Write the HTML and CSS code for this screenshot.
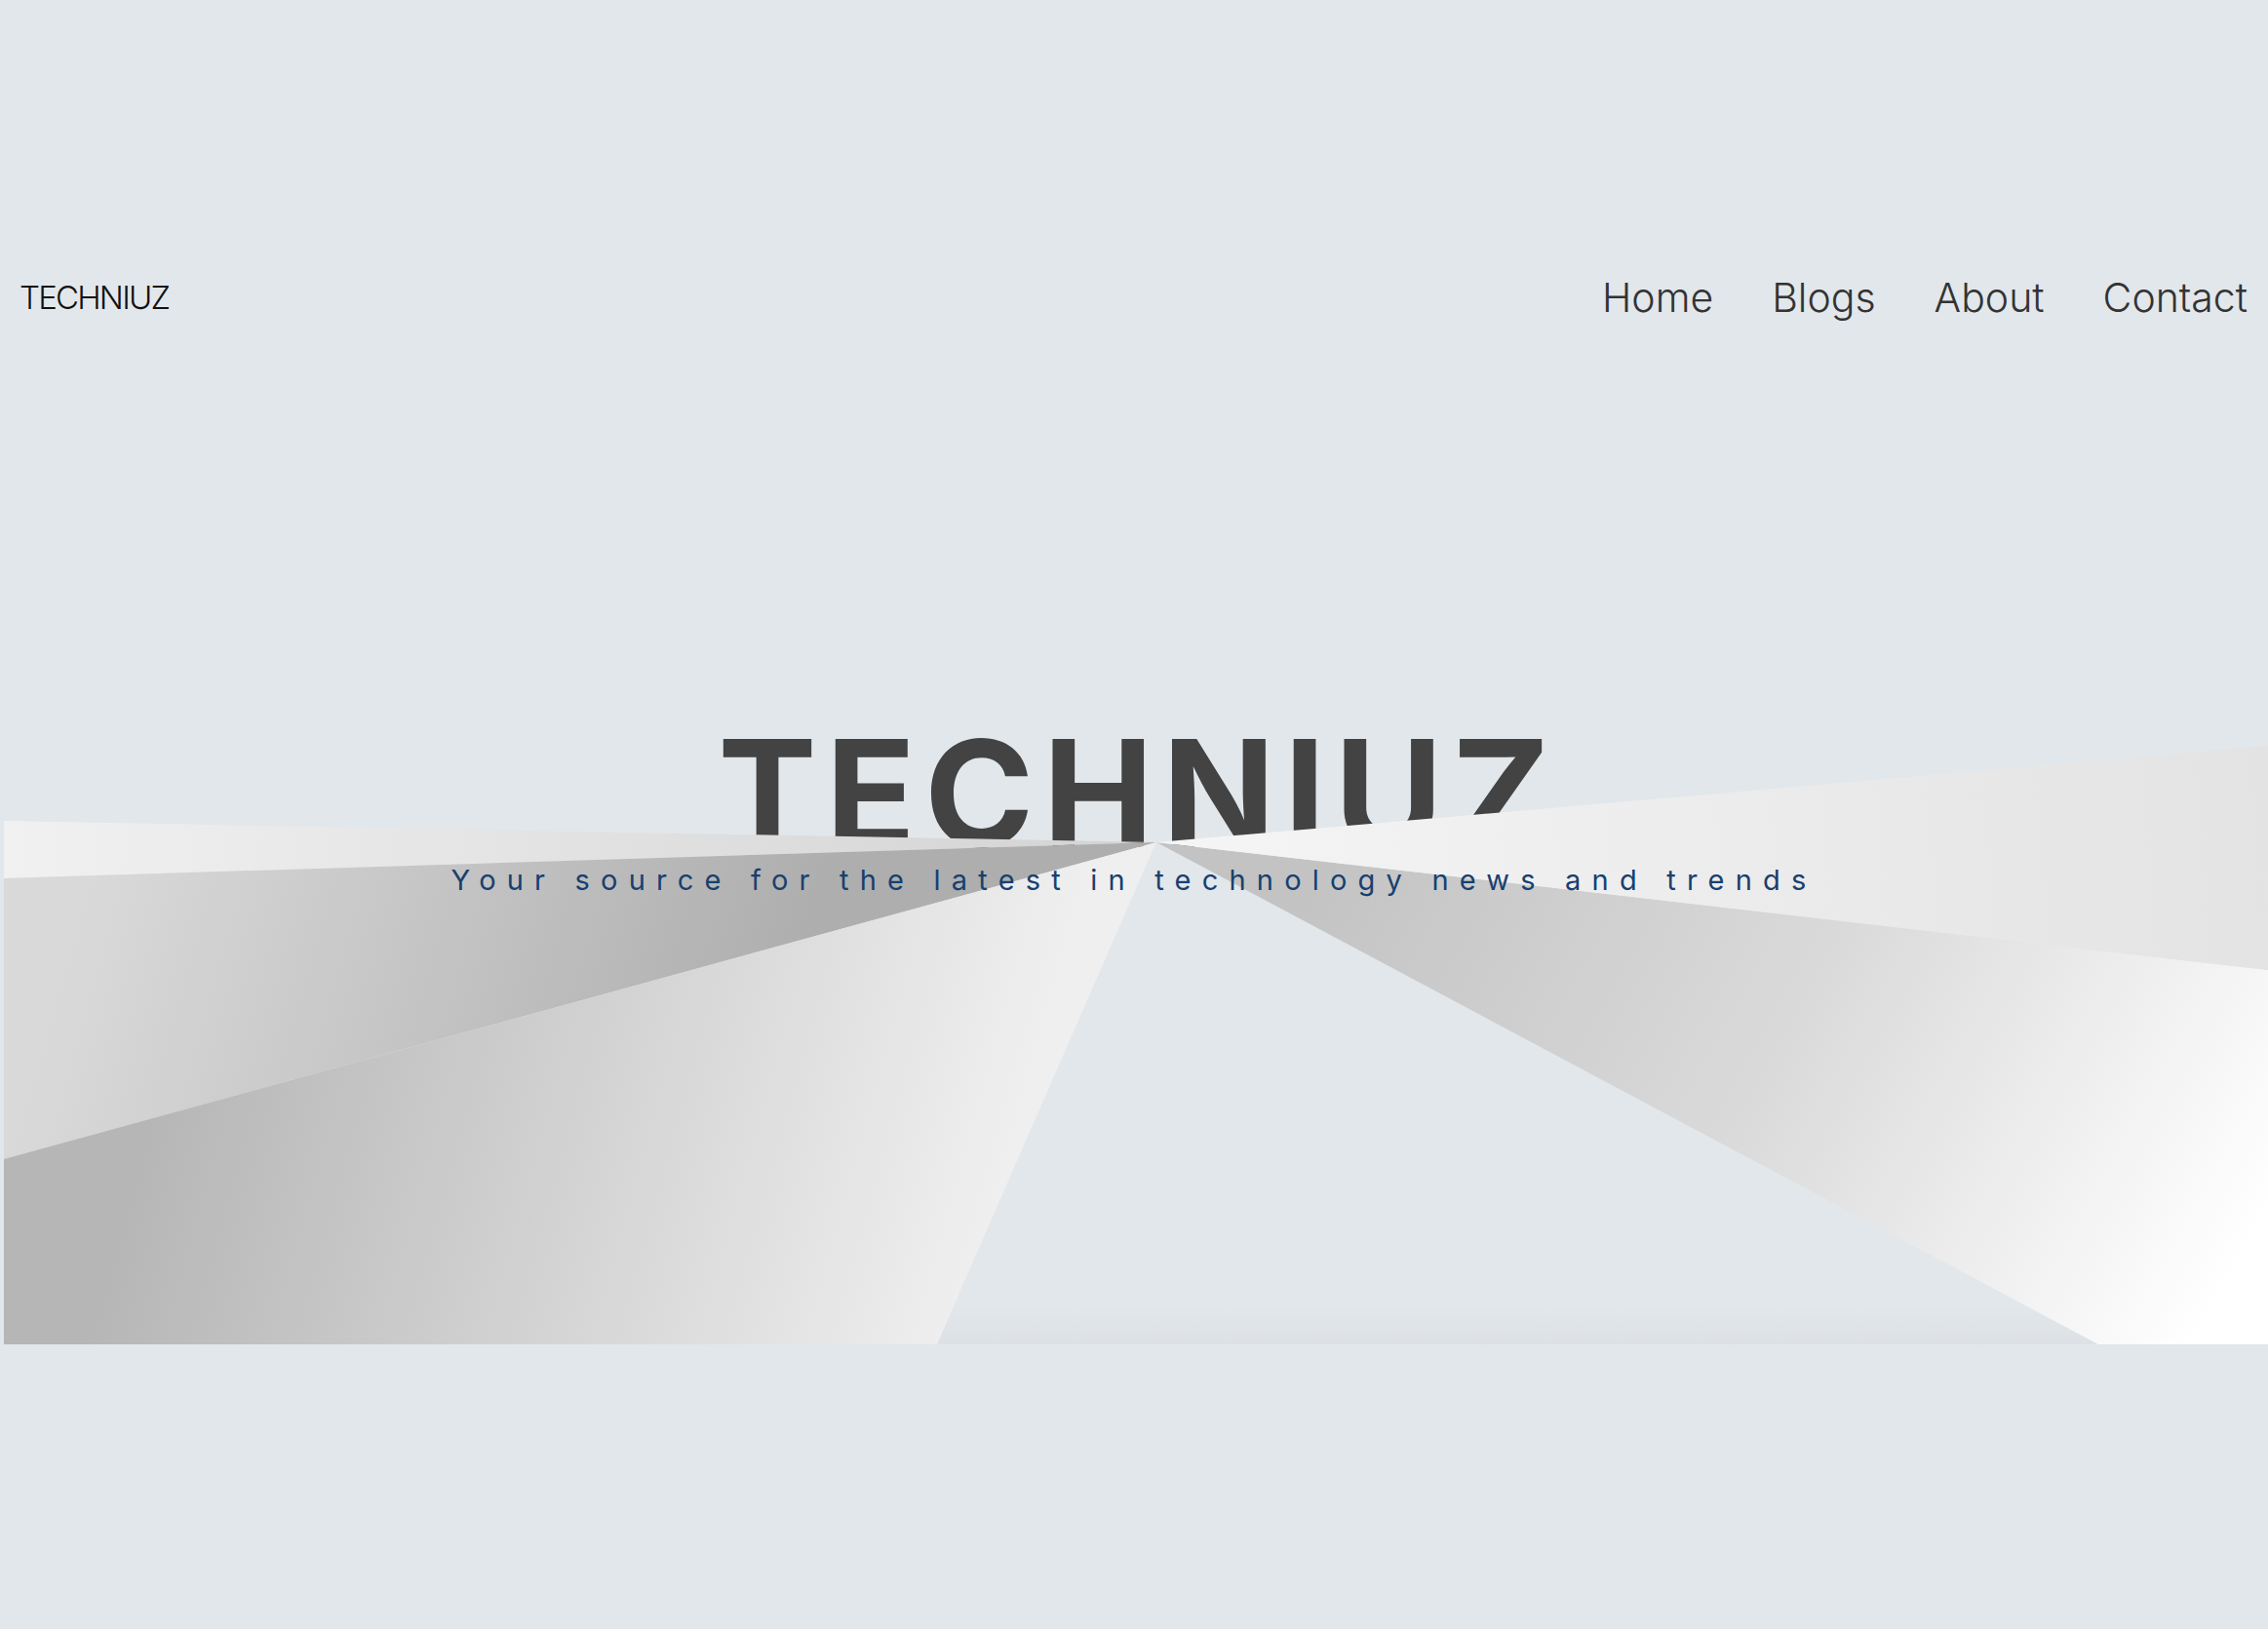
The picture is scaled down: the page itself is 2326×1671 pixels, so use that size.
FILE: index.html
```html
<!DOCTYPE html>
<html lang="en">
<head>
<meta charset="utf-8">
<title>TECHNIUZ</title>
<link rel="stylesheet" href="styles.css">
</head>
<body>
<div class="page">
  <header class="site-header">
    <a class="logo" href="#">TECHNIUZ</a>
    <nav class="nav">
      <a href="#">Home</a>
      <a href="#">Blogs</a>
      <a href="#">About</a>
      <a href="#">Contact</a>
    </nav>
  </header>

  <section class="hero">
    <h1 class="hero-title">TECHNIUZ</h1>
    <svg class="rays" viewBox="4 765 2322 614" preserveAspectRatio="none" aria-hidden="true">
      <defs>
        <linearGradient id="g1" gradientUnits="userSpaceOnUse" x1="4" y1="860" x2="1186" y2="880">
          <stop offset="0" stop-color="#f1f1f1"/>
          <stop offset="1" stop-color="#d3d3d3"/>
        </linearGradient>
        <linearGradient id="g2" gradientUnits="userSpaceOnUse" x1="100" y1="880" x2="800" y2="1080">
          <stop offset="0" stop-color="#d9d9d9"/>
          <stop offset="1" stop-color="#aeaeae"/>
        </linearGradient>
        <linearGradient id="g3" gradientUnits="userSpaceOnUse" x1="150" y1="1150" x2="980" y2="1380">
          <stop offset="0" stop-color="#b6b6b6"/>
          <stop offset="1" stop-color="#efefef"/>
        </linearGradient>
        <linearGradient id="g4" gradientUnits="userSpaceOnUse" x1="0" y1="1340" x2="0" y2="1379">
          <stop offset="0" stop-color="#e2e7eb"/>
          <stop offset="1" stop-color="#dde1e5"/>
        </linearGradient>
        <linearGradient id="g5" gradientUnits="userSpaceOnUse" x1="1350" y1="880" x2="2250" y2="1379">
          <stop offset="0" stop-color="#c3c3c3"/>
          <stop offset="0.5" stop-color="#dadada"/>
          <stop offset="1" stop-color="#ffffff"/>
        </linearGradient>
        <linearGradient id="g6" gradientUnits="userSpaceOnUse" x1="1200" y1="870" x2="2326" y2="780">
          <stop offset="0" stop-color="#f5f5f5"/>
          <stop offset="1" stop-color="#e3e3e3"/>
        </linearGradient>
      </defs>
      <polygon points="1186,864 4,842 4,901" fill="url(#g1)"/>
      <polygon points="1186,864 4,901 4,1189" fill="url(#g2)"/>
      <polygon points="1186,864 4,1189 4,1379 961,1379" fill="url(#g3)"/>
      <polygon points="1186,864 961,1379 2152,1379" fill="url(#g4)"/>
      <polygon points="1186,864 2152,1379 2326,1379 2326,995" fill="url(#g5)"/>
      <polygon points="1186,864 2326,995 2326,765" fill="url(#g6)"/>
    </svg>
    <p class="hero-tagline">Your source for the latest in technology news and trends</p>
  </section>
</div>
</body>
</html>
```

FILE: styles.css
```css
* {
  box-sizing: border-box;
}

html, body {
  margin: 0;
  padding: 0;
}

body {
  background: #e2e7eb;
  font-family: Inter, "Noto Sans", "Liberation Sans", sans-serif;
}

.page {
  position: relative;
  min-height: 1671px;
  padding-top: 270px;
}

.site-header {
  display: flex;
  justify-content: space-between;
  align-items: center;
  height: 70px;
  padding: 0 21px 0 20px;
}

.logo {
  color: #111;
  text-decoration: none;
  font-size: 33px;
  font-weight: 300;
  letter-spacing: -1.8px;
}

.nav {
  display: flex;
  gap: 60px;
}

.nav a {
  color: #333;
  text-decoration: none;
  font-size: 41px;
  font-weight: 300;
}

.hero {
  display: flex;
  flex-direction: column;
  align-items: center;
  padding-top: 398px;
}

.hero-title {
  position: relative;
  z-index: 0;
  margin: 0;
  font-size: 152px;
  line-height: 1;
  font-weight: 700;
  color: #434343;
  letter-spacing: 9px;
  padding-left: 9px;
}

.rays {
  position: absolute;
  left: 4px;
  top: 765px;
  width: 2322px;
  height: 614px;
  z-index: 1;
  display: block;
}

.hero-tagline {
  position: relative;
  z-index: 2;
  margin: -5px 0 0;
  font-size: 29px;
  font-weight: 400;
  color: #17406f;
  letter-spacing: 11.2px;
}
```
